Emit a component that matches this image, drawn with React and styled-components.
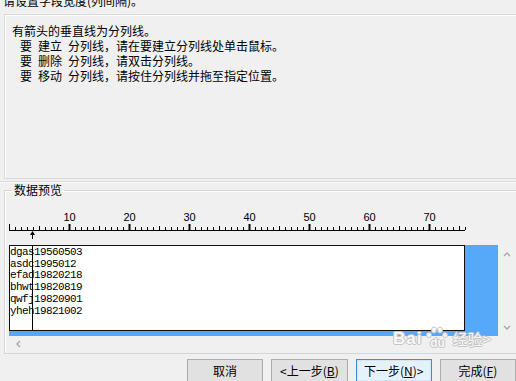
import styled, {createGlobalStyle} from 'styled-components'

const GlobalStyle = createGlobalStyle`
	body {
		margin: 0;
		background: #f0f0f0;
		font-family: "Noto Sans CJK SC", "Liberation Sans", sans-serif;
		font-size: 12px;
		color: #000;
	}
`

const Page = styled.div`
	position: relative;
	width: 516px;
	height: 381px;
	overflow: hidden;
	background: #f0f0f0;
`
const Title = styled.div`
	height: 14px;
	line-height: 14px;
	margin-top: -6px;
	padding-left: 3px;
	white-space: nowrap;
`
const InfoPanel = styled.div`
	margin: 6px 0 0 4px;
	width: 540px;
	height: 165px;
	box-sizing: border-box;
	border: 1px solid #d9d9d9;
	box-shadow: inset 1px 1px 0 #fff;
	padding: 8px 0 0 7px;
`
const Line = styled.div`
	height: 15px;
	line-height: 15px;
	padding-left: ${(props)=>props.indent ? "8px" : "0"};
	white-space: nowrap;
`
const Word = styled.span`
	margin-right: 6px;
`
const Divider = styled.div`
	margin-top: 2px;
	height: 1px;
	background: #dadada;
	border-bottom: 1px solid #fafafa;
`
const Group = styled.fieldset`
	margin: 0 0 0 4px;
	padding: 0 0 1px 4px;
	width: 540px;
	border: 1px solid #d5d5d5;
	box-shadow: 1px 1px 0 #fff inset;
	min-width: 0;
`
const Legend = styled.legend`
	margin-left: 3px;
	padding: 0 2px;
	line-height: 14px;
	font-size: 12px;
`
const Ruler = styled.svg`
	display: block;
	width: 460px;
	height: 45px;
	overflow: visible;
`
const DataRow = styled.div`
	display: flex;
	margin-top: 3px;
`
const Selection = styled.div`
	width: 489px;
	height: 91px;
	background: #56a8f9;
`
const DataBox = styled.div`
	position: relative;
	width: 456px;
	height: 86px;
	box-sizing: border-box;
	border: 1px solid #101010;
	background: #fff;
	padding-top: 1px;
	font-family: "Liberation Mono", monospace;
	font-size: 11px;
	letter-spacing: -0.6px;
	line-height: 11.7px;
`
const DataLine = styled.div`
	white-space: pre;
`
const BreakLine = styled.div`
	position: absolute;
	left: 22px;
	top: 0;
	bottom: 0;
	width: 1px;
	background: #000;
`
const VScroll = styled.div`
	width: 18px;
	height: 91px;
	display: flex;
	flex-direction: column;
	justify-content: space-between;
	align-items: center;
	padding: 6px 0 4px;
	box-sizing: border-box;
`
const HScroll = styled.div`
	height: 16px;
	display: flex;
	align-items: center;
	padding-left: 6px;
`
const ButtonRow = styled.div`
	display: flex;
	gap: 8px;
	margin: 5px 0 0 187px;
`
const Button = styled.button`
	width: 77px;
	height: 23px;
	padding: 0;
	font-family: "Noto Sans CJK SC", "Liberation Sans", sans-serif;
	font-size: 12px;
	line-height: 20px;
	color: #000;
	border: 1px solid ${(props)=>props.primary ? "#3c8ee0" : "#adadad"};
	background: ${(props)=>props.primary ? "#e5f1fb" : "#e1e1e1"};
	box-shadow: ${(props)=>props.primary ? "inset 0 0 0 1px #cfe6fb" : "none"};
	white-space: nowrap;
`
const Key = styled.span`
	text-decoration: underline;
`
const Watermark = styled.div`
	position: absolute;
	left: 393px;
	top: 326px;
	display: flex;
	align-items: flex-end;
	font-family: "Liberation Sans", sans-serif;
	font-weight: bold;
	color: rgba(255,255,255,0.9);
	text-shadow: 1px 0 0 #c4c4c4, -1px 0 0 #c4c4c4, 0 1px 0 #c4c4c4, 0 -1px 0 #c4c4c4;
	pointer-events: none;
`
const MarkBig = styled.span`
	font-size: 17px;
	line-height: 26px;
	letter-spacing: 1px;
`
const MarkPaw = styled.span`
	position: relative;
	width: 30px;
	height: 26px;
	display: flex;
	flex-direction: column;
	align-items: center;
`
const MarkDu = styled.span`
	font-size: 12px;
	line-height: 12px;
	margin-top: -1px;
`
const MarkSmall = styled.span`
	font-size: 15px;
	line-height: 26px;
	font-weight: normal;
	font-family: "Noto Sans CJK SC", sans-serif;
`

const Chevron = ({dir}) => {
	const pts = {
		up: "1,5 4,2 7,5",
		down: "1,2 4,5 7,2",
		left: "5,1 2,4 5,7",
	}[dir]
	return (
		<svg width="8" height="8" viewBox="0 0 8 8">
			<polyline points={pts} fill="none" stroke="#a8a8a8" strokeWidth="1.4"/>
		</svg>
	)
}

const RulerDrawing = () => {
	const ticks = []
	for (let i = 0; i <= 76; i++) {
		const x = i * 6 + 0.5
		const h = i % 10 === 0 ? 6 : i % 5 === 0 ? 4 : 3
		ticks.push(<line key={i} x1={x} x2={x} y1={33} y2={33 - h} stroke="#000" strokeWidth={i % 10 === 0 && i > 0 ? 2 : 1}/>)
	}
	const labels = [10, 20, 30, 40, 50, 60, 70]
	return (
		<Ruler viewBox="0 0 460 45">
			{labels.map((n)=>(
				<text key={n} x={n * 6 + 0.5} y={24} textAnchor="middle" fontFamily="Liberation Sans, sans-serif" fontSize="11">{n}</text>
			))}
			<line x1="0" x2="456" y1="33.5" y2="33.5" stroke="#000"/>
			{ticks}
			<line x1="23.5" x2="23.5" y1="35" y2="42" stroke="#000"/>
			<polygon points="23.5,34 21,38 26,38" fill="#000"/>
		</Ruler>
	)
}

const rows = [
	"dgas19560503",
	"asdc1995012",
	"efad19820218",
	"bhwt19820819",
	"qwfj19820901",
	"yheh19821002",
]

const App = () => {
	return (
		<Page>
			<GlobalStyle/>
			<Title>请设置字段宽度(列间隔)。</Title>
			<InfoPanel>
				<Line>有箭头的垂直线为分列线。</Line>
				<Line indent><Word>要</Word><Word>建立</Word>分列线，请在要建立分列线处单击鼠标。</Line>
				<Line indent><Word>要</Word><Word>删除</Word>分列线，请双击分列线。</Line>
				<Line indent><Word>要</Word><Word>移动</Word>分列线，请按住分列线并拖至指定位置。</Line>
			</InfoPanel>
			<Divider/>
			<Group>
				<Legend>数据预览</Legend>
				<RulerDrawing/>
				<DataRow>
					<Selection>
						<DataBox>
							{rows.map((r)=>(
								<DataLine key={r}>{r}</DataLine>
							))}
							<BreakLine/>
						</DataBox>
					</Selection>
					<VScroll>
						<Chevron dir="up"/>
						<Chevron dir="down"/>
					</VScroll>
				</DataRow>
				<HScroll>
					<Chevron dir="left"/>
				</HScroll>
			</Group>
			<ButtonRow>
				<Button>取消</Button>
				<Button>&lt;上一步(<Key>B</Key>)</Button>
				<Button primary>下一步(<Key>N</Key>)&gt;</Button>
				<Button>完成(<Key>F</Key>)</Button>
			</ButtonRow>
			<Watermark>
				<MarkBig>Bai</MarkBig>
				<MarkPaw>
					<svg width="26" height="12" viewBox="0 0 26 12">
						<g fill="rgba(255,255,255,0.9)" stroke="#c4c4c4" strokeWidth="1">
							<ellipse cx="5" cy="9" rx="2.5" ry="2.5"/>
							<ellipse cx="10" cy="4" rx="2.5" ry="3"/>
							<ellipse cx="16" cy="4" rx="2.5" ry="3"/>
							<ellipse cx="21" cy="9" rx="2.5" ry="2.5"/>
						</g>
					</svg>
					<MarkDu>du</MarkDu>
				</MarkPaw>
				<MarkSmall>经验&gt;</MarkSmall>
			</Watermark>
		</Page>
	)
}
export default App
